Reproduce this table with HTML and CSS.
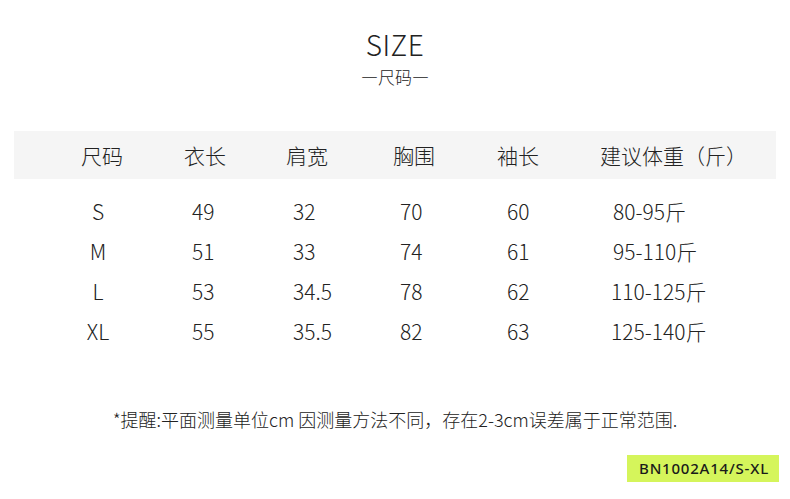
FILE: index.html
```html
<!DOCTYPE html>
<html lang="zh-CN">
<head>
<meta charset="utf-8">
<title>SIZE 尺码</title>
<link rel="stylesheet" href="styles.css">
</head>
<body>
<div class="page">
  <header class="title">
    <div class="title-en">SIZE</div>
    <div class="title-cn">—尺码—</div>
  </header>
  <div class="table">
    <div class="row head">
      <div class="c1">尺码</div>
      <div class="c2">衣长</div>
      <div class="c3">肩宽</div>
      <div class="c4">胸围</div>
      <div class="c5">袖长</div>
      <div class="c6">建议体重（斤）</div>
    </div>
    <div class="body">
      <div class="row data">
        <div class="c1">S</div><div class="c2">49</div><div class="c3">32</div><div class="c4">70</div><div class="c5">60</div><div class="c6 w1">80-95斤</div>
      </div>
      <div class="row data">
        <div class="c1">M</div><div class="c2">51</div><div class="c3">33</div><div class="c4">74</div><div class="c5">61</div><div class="c6 w1">95-110斤</div>
      </div>
      <div class="row data">
        <div class="c1">L</div><div class="c2">53</div><div class="c3">34.5</div><div class="c4">78</div><div class="c5">62</div><div class="c6">110-125斤</div>
      </div>
      <div class="row data">
        <div class="c1">XL</div><div class="c2">55</div><div class="c3">35.5</div><div class="c4">82</div><div class="c5">63</div><div class="c6">125-140斤</div>
      </div>
    </div>
  </div>
  <p class="note">*提醒:平面测量单位cm 因测量方法不同，存在2-3cm误差属于正常范围.</p>
  <div class="badge-wrap"><span class="badge">BN1002A14/S-XL</span></div>
</div>
</body>
</html>
```
FILE: styles.css
```css
html, body {
  margin: 0;
  padding: 0;
  background: #ffffff;
}
body {
  font-family: "Noto Sans CJK SC", "Noto Sans", sans-serif;
  font-weight: 300;
  color: #222222;
  width: 790px;
  height: 499px;
  overflow: hidden;
}
.page {
  display: flex;
  flex-direction: column;
  padding-top: 25px;
}
.title {
  display: flex;
  flex-direction: column;
  align-items: center;
}
.title-en {
  font-size: 28px;
  line-height: 38px;
  letter-spacing: 0.5px;
}
.title-cn {
  font-size: 17px;
  line-height: 24px;
  margin-top: 2px;
}
.table {
  margin: 42px 14px 0 14px;
}
.row {
  display: grid;
  grid-template-columns: 168px 102px 107px 104px 103px 1fr;
}
.head {
  background: #f5f5f5;
  height: 48px;
  align-items: center;
  font-size: 21px;
  line-height: 48px;
}
.head .c1 { text-align: center; padding-left: 8px; }
.head .c2, .head .c3, .head .c4, .head .c5, .head .c6 { padding-left: 2px; }
.body {
  padding-top: 12px;
}
.data {
  height: 40px;
  line-height: 40px;
  font-size: 21px;
}
.data .c1 { text-align: center; }
.data .c2 { padding-left: 10px; }
.data .c3 { padding-left: 9px; }
.data .c4 { padding-left: 9px; }
.data .c5 { padding-left: 12px; }
.data .c6 { padding-left: 13px; }
.data .c6.w1 { padding-left: 15px; }
.note {
  margin: 57px 0 0 0;
  text-align: center;
  font-size: 18px;
  line-height: 22px;
}
.badge-wrap {
  display: flex;
  justify-content: flex-end;
  padding-right: 11px;
  margin-top: 25px;
}
.badge {
  background: #d5f55b;
  color: #1a1a1a;
  font-family: "Noto Sans", sans-serif;
  font-weight: 500;
  font-size: 15px;
  line-height: 27px;
  padding: 0 10px 0 12px;
  letter-spacing: 0.8px;
}
```
